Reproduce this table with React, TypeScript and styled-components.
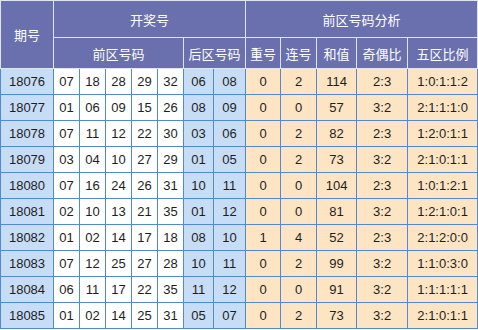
import styled, { createGlobalStyle } from "styled-components";

const GlobalStyle = createGlobalStyle`
  body {
    margin: 0;
    background: #ffffff;
    font-family: "Liberation Sans", "Noto Sans CJK SC", sans-serif;
  }
`;

type Tone = "issue" | "front" | "back" | "analysis";

const toneColors: Record<Tone, string> = {
  issue: "#c7ddf6",
  front: "#ffffff",
  back: "#c7ddf6",
  analysis: "#fde4c3",
};

const Table = styled.table`
  width: 477px;
  border-collapse: collapse;
  table-layout: fixed;
  font-size: 13px;
  color: #1e1e1e;
`;

const HeadCell = styled.th<{ $height?: number }>`
  background: #6a6fae;
  color: #ffffff;
  font-family: "Noto Sans CJK SC", "Liberation Sans", sans-serif;
  font-weight: 400;
  font-size: 13px;
  height: ${(p) => p.$height ?? 30}px;
  padding: 0;
  border: 1px solid #dfe4f3;
  text-align: center;
`;

const Cell = styled.td<{ $tone: Tone }>`
  background: ${(p) => toneColors[p.$tone]};
  height: 25px;
  padding: 0;
  border: 1px solid #5189d6;
  text-align: center;
`;

const rows = [
  ["18076", "07 18 28 29 32", "06 08", "0", "2", "114", "2:3", "1:0:1:1:2"],
  ["18077", "01 06 09 15 26", "08 09", "0", "0", "57", "3:2", "2:1:1:1:0"],
  ["18078", "07 11 12 22 30", "03 06", "0", "2", "82", "2:3", "1:2:0:1:1"],
  ["18079", "03 04 10 27 29", "01 05", "0", "2", "73", "3:2", "2:1:0:1:1"],
  ["18080", "07 16 24 26 31", "10 11", "0", "0", "104", "2:3", "1:0:1:2:1"],
  ["18081", "02 10 13 21 35", "01 12", "0", "0", "81", "3:2", "1:2:1:0:1"],
  ["18082", "01 02 14 17 18", "08 10", "1", "4", "52", "2:3", "2:1:2:0:0"],
  ["18083", "07 12 25 27 28", "10 11", "0", "2", "99", "3:2", "1:1:0:3:0"],
  ["18084", "06 11 17 22 35", "11 12", "0", "0", "91", "3:2", "1:1:1:1:1"],
  ["18085", "01 02 14 25 31", "05 07", "0", "2", "73", "3:2", "2:1:0:1:1"],
];

const colWidths = [53, 26, 26, 26, 26, 26, 30, 32, 35, 36, 40, 51, 70];

export default function App() {
  return (
    <>
      <GlobalStyle />
      <Table>
        <colgroup>
          {colWidths.map((w, i) => (
            <col key={i} style={{ width: w }} />
          ))}
        </colgroup>
        <thead>
          <tr>
            <HeadCell rowSpan={2}>期号</HeadCell>
            <HeadCell colSpan={7} $height={36}>开奖号</HeadCell>
            <HeadCell colSpan={5} $height={36}>前区号码分析</HeadCell>
          </tr>
          <tr>
            <HeadCell colSpan={5}>前区号码</HeadCell>
            <HeadCell colSpan={2}>后区号码</HeadCell>
            <HeadCell>重号</HeadCell>
            <HeadCell>连号</HeadCell>
            <HeadCell>和值</HeadCell>
            <HeadCell>奇偶比</HeadCell>
            <HeadCell>五区比例</HeadCell>
          </tr>
        </thead>
        <tbody>
          {rows.map(([issue, front, back, ...stats]) => (
            <tr key={issue}>
              <Cell $tone="issue">{issue}</Cell>
              {front.split(" ").map((n, i) => (
                <Cell key={"f" + i} $tone="front">{n}</Cell>
              ))}
              {back.split(" ").map((n, i) => (
                <Cell key={"b" + i} $tone="back">{n}</Cell>
              ))}
              {stats.map((s, i) => (
                <Cell key={"s" + i} $tone="analysis">{s}</Cell>
              ))}
            </tr>
          ))}
        </tbody>
      </Table>
    </>
  );
}
